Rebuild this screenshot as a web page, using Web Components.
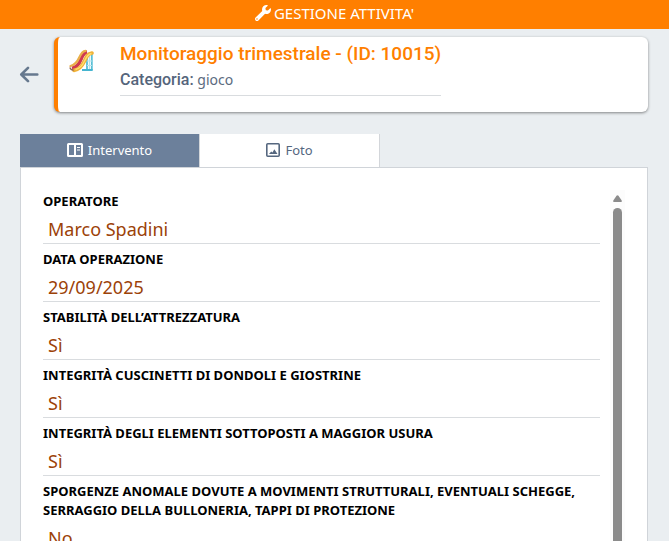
<!DOCTYPE html>
<html lang="it">
<head>
<meta charset="utf-8">
<meta name="viewport" content="width=device-width, initial-scale=1">
<title>Gestione attività</title>
<style>
html, body { height: 100%; margin: 0; }
body { background: #eaeef1; font-family: "Noto Sans", sans-serif; color: #5b6b80; overflow: hidden; }
</style>
</head>
<body>
<activity-page></activity-page>

<template id="t-bar">
<style>
:host { display: block; background: #ff7f00; color: #fff; }
h1 { display: flex; justify-content: center; align-items: center; gap: 3px; margin: 0; padding: 0 0 3px; font-size: 15px; line-height: 26px; font-weight: 400; }
svg { display: block; }
</style>
<h1><svg width="16" height="16" viewBox="0 0 512 512" fill="currentColor" aria-hidden="true"><path d="M507.700 109.100c-2.200-9-13.500-12.100-20.100-5.500l-74.400 74.400-67.900-11.300L334 98.900l74.400-74.400c6.600-6.600 3.400-17.900-5.700-20.200-47.400-11.700-99.600.9-136.600 37.900-39.600 39.600-50.500 97.100-34.100 147.200L18.700 402.800c-25 25-25 65.500 0 90.500s65.500 25 90.500 0l213.200-213.200c50.100 16.700 107.500 5.700 147.400-34.200 37.100-37.100 49.700-89.300 37.900-136.800zM64 472c-13.200 0-24-10.700-24-24 0-13.300 10.700-24 24-24s24 10.700 24 24c0 13.300-10.700 24-24 24z"/></svg><slot></slot></h1>
</template>

<template id="t-back">
<style>
:host { display: block; }
button { display: block; padding: 0; border: 0; background: none; color: #66788e; cursor: pointer; }
svg { display: block; }
</style>
<button type="button" aria-label="Indietro"><svg width="20" height="18" viewBox="0 0 20 18" fill="none" stroke="currentColor" stroke-width="2.600" stroke-linecap="round" stroke-linejoin="round" aria-hidden="true"><path d="M18.300 8.500H3M9 1.800 2.300 8.500 9 15.200"/></svg></button>
</template>

<template id="t-card">
<style>
:host { display: flex; gap: 24px; box-sizing: border-box; padding: 4px 12px 16px 11px; background: #fff; border-left: 4px solid #ff7f00; border-radius: 6px; box-shadow: 0 1px 3px rgba(0,0,0,.45); }
svg { display: block; margin-top: 8px; flex: none; }
.text { border-bottom: 1px solid #d9dcdf; }
h2 { margin: 0; font: 500 19px/26px Roboto, sans-serif; color: #ff7f00; }
p { margin: 0; padding-bottom: 2px; font-size: 14px; line-height: 26px; }
b { font-family: Roboto, sans-serif; font-size: 16px; font-weight: 500; color: #55657b; }
</style>
<svg width="27" height="24" viewBox="0 0 27 24" fill="none" aria-hidden="true">
<path d="M18 9v12M22.800 4v17" stroke="#58bfd6" stroke-width="1.800"/>
<path d="M20.400 7v13M18 12h5M18 16.500h5" stroke="#b5e1ea" stroke-width="1.200"/>
<path d="M13 21h10.700" stroke="#45b5d0" stroke-width="2"/>
<path d="M3 19.300c5-1 7-4 9-9s4-7 6-7.500" stroke="#cf3950" stroke-width="3.500"/>
<path d="M1.500 17c4.500-1 6.500-3.500 8.500-8s3.500-7 6.500-7.200" stroke="#e9b04a" stroke-width="2.300" stroke-linecap="round"/>
<path d="M5 21.300c5.500-.5 8-4 10.500-9.300 2-4.500 3-7.200 7.500-8" stroke="#f0b137" stroke-width="3.700" stroke-linecap="round"/>
<path d="M6.500 20.500c4.500-1 7-4 9-8.500 2-4.500 3.500-7 7-7.500" stroke="#ffe070" stroke-width="1.300"/>
<path d="M.8 18.500c.7 2 2.200 2.700 4 2.500" stroke="#8d6255" stroke-width="1.200"/>
</svg>
<div class="text"><h2><slot name="title"></slot></h2><p><b>Categoria:</b> <slot name="category"></slot></p></div>
</template>

<template id="t-tab">
<style>
:host { display: block; width: 180px; }
button { display: flex; align-items: center; justify-content: center; gap: 5px; box-sizing: border-box; width: 100%; margin: 0; padding: 7px 0 8px; border: 0; border-right: 1px solid #d3d6da; background: #fff; color: #55677f; font: 400 13px/18px "Noto Sans", sans-serif; cursor: pointer; }
:host([active]) button { background: #6c809b; color: #fff; }
::slotted(svg) { display: block; }
</style>
<button type="button" role="tab"><slot name="icon"></slot><span><slot></slot></span></button>
</template>

<template id="t-field">
<style>
:host { display: block; border-bottom: 1px solid #d9dcdf; }
dl, dd { margin: 0; }
dt { font-size: 13px; line-height: 19px; font-weight: 700; color: #000; text-transform: uppercase; }
dd { padding: 5px 5px 1px; font-size: 18px; line-height: 26px; color: #9c4208; }
</style>
<dl><dt><slot name="label"></slot></dt><dd><slot></slot></dd></dl>
</template>

<template id="t-panel">
<style>
:host { display: flex; gap: 10px; box-sizing: border-box; padding: 22px 22px 0; background: #fff; border: 1px solid #d0d4d9; border-bottom: 0; }
.list { flex: 1; min-width: 0; min-height: 0; display: flex; flex-direction: column; gap: 6px; padding-top: 2px; overflow-y: auto; scrollbar-width: none; }
::slotted(*) { flex: none; }
.rail { display: flex; flex-direction: column; align-items: center; gap: 6px; width: 15px; padding-top: 5px; background: #fcfcfc; box-sizing: border-box; }
.rail svg { display: block; flex: none; }
.thumb { flex: 1; width: 9px; border-radius: 5px 5px 0 0; background: #8b8b8b; }
</style>
<div class="list" tabindex="0"><slot></slot></div>
<div class="rail" aria-hidden="true"><svg width="9" height="7" viewBox="0 0 9 7" fill="#8b8b8b"><path d="M3.500 .7q1-1 2 0L8.700 5.500Q9.300 7 8 7H1Q-.3 7 .3 5.500z"/></svg><div class="thumb"></div></div>
</template>

<template id="t-page">
<style>
:host { display: flex; flex-direction: column; height: 100vh; }
title-bar { flex: none; }
.top { display: flex; align-items: center; gap: 15px; padding: 8px 21px 22px 19px; }
activity-card { flex: 1; }
nav { display: flex; padding: 0 20px; }
detail-panel { flex: 1; min-height: 0; margin: 0 21px 0 20px; }
</style>
<title-bar>GESTIONE ATTIVITA'</title-bar>
<div class="top"><back-button></back-button><activity-card><span slot="title">Monitoraggio trimestrale - (ID: 10015)</span><span slot="category">gioco</span></activity-card></div>
<nav role="tablist">
<tab-button active><svg slot="icon" width="16" height="14" viewBox="0 0 16 14" fill="none" stroke="currentColor" aria-hidden="true"><rect x="1" y="1" width="14" height="12" rx=".5" stroke-width="2"/><path d="M8 1v12" stroke-width="2"/><path d="M10 4.500h3M10 7h3" stroke-width="1.200"/></svg>Intervento</tab-button>
<tab-button><svg slot="icon" width="14" height="14" viewBox="0 0 14 14" fill="none" stroke="currentColor" aria-hidden="true"><rect x=".8" y=".8" width="12.400" height="12.400" rx="1" stroke-width="1.600"/><path d="m3 11 2.200-2.500 1.300 1L8.300 6.200 11.500 11z" fill="currentColor" stroke="none"/></svg>Foto</tab-button>
</nav>
<detail-panel>
<data-field><span slot="label">Operatore</span>Marco Spadini</data-field>
<data-field><span slot="label">Data operazione</span>29/09/2025</data-field>
<data-field><span slot="label">Stabilità dell’attrezzatura</span>Sì</data-field>
<data-field><span slot="label">Integrità cuscinetti di dondoli e giostrine</span>Sì</data-field>
<data-field><span slot="label">Integrità degli elementi sottoposti a maggior usura</span>Sì</data-field>
<data-field><span slot="label">Sporgenze anomale dovute a movimenti strutturali, eventuali schegge, serraggio della bulloneria, tappi di protezione</span>No</data-field>
</detail-panel>
</template>

<script>
const define = (tag, templateId) => customElements.define(tag, class extends HTMLElement {
  constructor() {
    super();
    this.attachShadow({ mode: 'open' }).append(document.getElementById(templateId).content.cloneNode(true));
  }
  connectedCallback() {
    const tab = this.shadowRoot.querySelector('[role=tab]');
    if (tab) tab.setAttribute('aria-selected', String(this.hasAttribute('active')));
  }
});
define('title-bar', 't-bar');
define('back-button', 't-back');
define('activity-card', 't-card');
define('tab-button', 't-tab');
define('data-field', 't-field');
define('detail-panel', 't-panel');
define('activity-page', 't-page');
</script>
</body>
</html>
